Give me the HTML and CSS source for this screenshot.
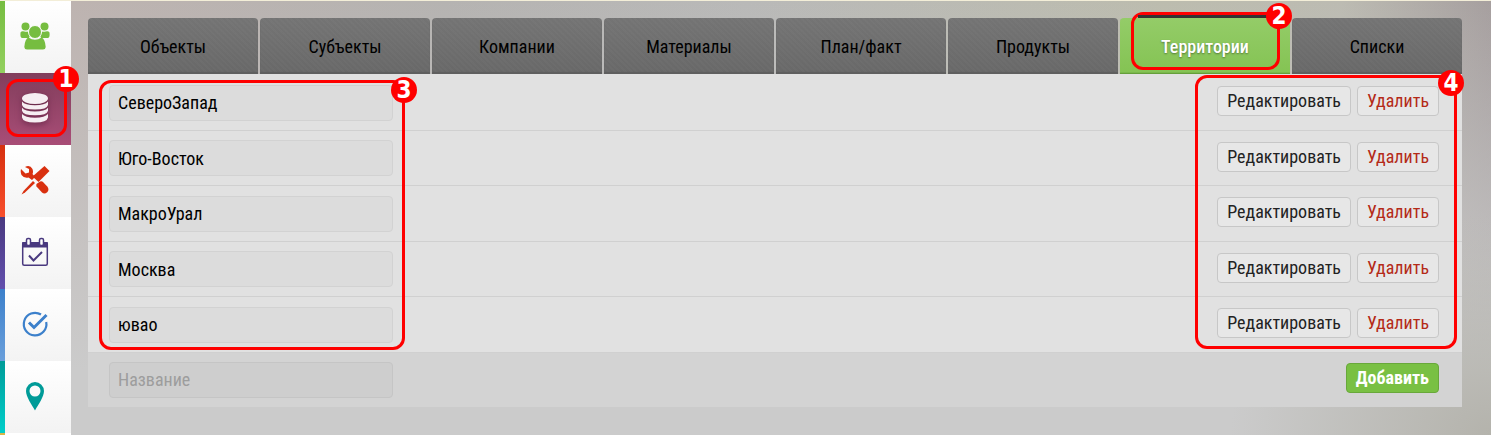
FILE: index.html
```html
<!DOCTYPE html>
<html lang="ru">
<head>
<meta charset="utf-8">
<title>Территории</title>
<link rel="stylesheet" href="styles.css">
</head>
<body>
<div class="app">
  <nav class="sidebar" aria-label="Разделы">
    <a class="nav-item users" href="#" aria-label="Пользователи">
      <svg width="30" height="28" viewBox="0 0 30 28" fill="currentColor"><circle cx="5.500" cy="4.500" r="4"/><circle cx="24.500" cy="4.500" r="4"/><path d="M.5 10.500Q1.500 9 3 9.200Q5 10 7.500 9.500L10 13 9 16H2Q0 15.500.5 10.500ZM29.500 10.500Q28.500 9 27 9.200Q25 10 22.500 9.500L20 13 21 16H28Q30 15.500 29.500 10.500Z"/><circle cx="15" cy="10" r="6.500" stroke="#fcfcfc" stroke-width="1"/><path d="M8.500 15.500Q15 20 21.500 15.500Q25 16.500 25.700 25Q25.500 27.500 23 27.500H7Q4.500 27.500 4.300 25Q5 16.500 8.500 15.500Z"/></svg>
    </a>
    <a class="nav-item data active" href="#" aria-label="Справочники">
      <svg width="28" height="32" viewBox="0 0 28 32" fill="currentColor"><ellipse cx="14" cy="6.500" rx="13" ry="5.500"/><path d="M1 9.500Q4 13.300 14 13.300T27 9.500V13Q26 17.500 14 17.500T1 13Z"/><path d="M1 15.700Q4 19.500 14 19.500T27 15.700V18.700Q26 23.200 14 23.200T1 18.700Z"/><path d="M1 22Q4 25.700 14 25.700T27 22V25.500Q26 30.500 14 30.500T1 25.500Z"/></svg>
    </a>
    <a class="nav-item tools" href="#" aria-label="Инструменты">
      <svg width="30" height="30" viewBox="0 0 30 30" fill="currentColor"><path d="M24.500 1 29.500 6 18.500 17 12.500 11.500Z"/><path d="M13 16 15 18 5 27.500 1.500 29.500 3.500 26Z"/><path d="M5 2Q10-.5 12.500 4Q13.500 7 12.500 9L15 12 12 15 8.500 12.500Q4 13.500 1.500 10Q.2 7 1 4L5.500 8.500 9 7.500V4Z"/><path d="M20 16.500Q22 16 23 17L27.500 21.800Q29.500 25 27.200 27.200Q24.500 29.500 22 27.500L16.500 21.500Q16 20 16.500 19Z"/></svg>
    </a>
    <a class="nav-item plan" href="#" aria-label="Календарь">
      <svg width="28" height="30" viewBox="0 0 28 30" fill="none" stroke="currentColor"><rect x="1.700" y="6" width="24.600" height="22.300" rx="1.500" stroke-width="1.500"/><path d="M1.500 5.500H26.500V10H1.500Z" fill="currentColor"/><rect x="5.500" y="1.500" width="4" height="7" rx="1.500" fill="#fff" stroke-width="1.500"/><rect x="18.500" y="1.500" width="4" height="7" rx="1.500" fill="#fff" stroke-width="1.500"/><path d="M8 18.500 12.500 23.500 21 15" stroke-width="2"/></svg>
    </a>
    <a class="nav-item tasks" href="#" aria-label="Задачи">
      <svg width="28" height="28" viewBox="0 0 28 28" fill="none" stroke="currentColor" stroke-width="2.200"><path d="M20 4.500A11.300 11.300 0 1 0 25.200 12"/><path d="M8 12.500 13 17.500 25.500 5" stroke-width="3"/></svg>
    </a>
    <a class="nav-item map" href="#" aria-label="Карта">
      <svg width="20" height="30" viewBox="0 0 20 30" fill="currentColor"><path fill-rule="evenodd" d="M10 1A9 9 0 0 1 19 10C19 16 13 24 10 29.500C7 24 1 16 1 10A9 9 0 0 1 10 1ZM10 4.500A5.500 5.500 0 1 0 10 15.500 5.500 5.500 0 0 0 10 4.500Z"/></svg>
    </a>
    <span class="nav-next"></span>
    <div class="mark mark-1"><b>1</b></div>
  </nav>
  <main class="content">
    <nav class="tabs">
      <a class="tab" href="#">Объекты</a>
      <a class="tab" href="#">Субъекты</a>
      <a class="tab" href="#">Компании</a>
      <a class="tab" href="#">Материалы</a>
      <a class="tab" href="#">План/факт</a>
      <a class="tab" href="#">Продукты</a>
      <a class="tab current" href="#">Территории<span class="mark mark-2"><b>2</b></span></a>
      <a class="tab" href="#">Списки</a>
    </nav>
    <table class="list">
      <tbody>
        <tr><td><input aria-label="Название 1" value="СевероЗапад"></td><td class="actions"><button class="btn">Редактировать</button><button class="btn danger">Удалить</button></td></tr>
        <tr><td><input aria-label="Название 2" value="Юго-Восток"></td><td class="actions"><button class="btn">Редактировать</button><button class="btn danger">Удалить</button></td></tr>
        <tr><td><input aria-label="Название 3" value="МакроУрал"></td><td class="actions"><button class="btn">Редактировать</button><button class="btn danger">Удалить</button></td></tr>
        <tr><td><input aria-label="Название 4" value="Москва"></td><td class="actions"><button class="btn">Редактировать</button><button class="btn danger">Удалить</button></td></tr>
        <tr><td><input aria-label="Название 5" value="ювао"></td><td class="actions"><button class="btn">Редактировать</button><button class="btn danger">Удалить</button></td></tr>
        <tr class="new"><td><input aria-label="Новая территория" placeholder="Название"></td><td class="actions"><button class="btn add">Добавить</button></td></tr>
      </tbody>
    </table>
    <div class="mark mark-3"><b>3</b></div>
    <div class="mark mark-4"><b>4</b></div>
  </main>
</div>
</body>
</html>
```
FILE: styles.css
```css
* { box-sizing: border-box; }
body {
  margin: 0;
  font: 18px/24px "Roboto Condensed", "Liberation Sans Narrow", Roboto, sans-serif;
  color: #000;
}
.app {
  display: flex;
  min-height: 100vh;
  border-top: 1px solid #f3eed8;
  overflow: hidden;
  background:
    radial-gradient(ellipse 260px 220px at 100% 100%, #b4b3ac, rgba(180, 179, 172, 0)),
    linear-gradient(to bottom, transparent 0%, #cbcbcb 85%),
    linear-gradient(to right, #bdb3b0 5%, #b5b3b1 30%, #b9b9b8 50%, #bcbcae 78%, #bcbbb2 90%, #a69f9f 100%);
}
.sidebar { position: relative; flex: none; width: 71px; }
.nav-item {
  display: flex;
  align-items: center;
  justify-content: center;
  height: 72px;
  border-left: 5px solid;
  padding: 0 6px 3px 0;
  background: linear-gradient(#fff, #f3f3f3);
}
.nav-item svg { display: block; }
.users { color: #76bd40; border-image: linear-gradient(#76bd40, #93d05f) 1; }
.tools { color: #d9300f; border-image: linear-gradient(#d62f0e, #f84f2c) 1; }
.plan { color: #49397f; border-image: linear-gradient(#49397f, #6350ae) 1; }
.tasks { color: #3c80cb; border-image: linear-gradient(#3c80cb, #6a9fdb) 1; }
.map { color: #009b98; border-image: linear-gradient(#009b98, #00cfcb) 1; }
.data { color: #f6eef2; border: 0; padding: 0 1px 3px 0; background: linear-gradient(#823e5c, #a94d77); }
.data svg { filter: drop-shadow(0 2px 3px rgba(60, 10, 40, .5)); }
.nav-next { display: block; height: 2px; background: #fff; border-left: 5px solid #dab648; }
.content { position: relative; flex: 1; padding: 17px 29px 28px 17px; min-width: 0; }
.tabs { display: grid; grid-template-columns: repeat(8, 1fr); gap: 2px; }
.tab {
  position: relative;
  display: flex;
  align-items: center;
  justify-content: center;
  height: 56px;
  padding-top: 2px;
  border-radius: 4px 4px 0 0;
  color: #000;
  text-decoration: none;
  background: repeating-linear-gradient(45deg, rgba(255, 255, 255, .02) 0 2px, transparent 2px 4px), linear-gradient(#747474, #686868);
  box-shadow: inset 0 -2px 1px #5f5f5f;
}
.current {
  color: #fff;
  font-weight: 500;
  text-shadow: 0 1px 2px rgba(0, 0, 0, .4);
  background: linear-gradient(#94cc68, #84c353);
  box-shadow: inset 0 -1px #659f3b, inset 0 -2px #7ab84c;
}
.list { width: 100%; padding-top: 1px; border-spacing: 0; background: #e1e1e1; }
.list td { height: 55px; padding: 0 21px; border-bottom: 1px solid #d0d0d0; vertical-align: middle; }
.list tr:nth-child(odd) td { height: 56px; }
.list .new td { height: 54px; background: #d3d3d3; border-color: #d3d3d3; }
.list .actions { text-align: right; padding: 0 23px 3px; }
.list input {
  display: block;
  width: 284px;
  height: 36px;
  padding: 0 8px;
  border: 1px solid #d2d2d2;
  border-radius: 4px;
  background: #dcdcdc;
  font: inherit;
  color: #000;
}
.list input::placeholder { color: #9d9d9d; opacity: 1; }
.list .new input { background: #cecece; border-color: #c5c5c5; }
.btn {
  height: 30px;
  padding: 0 9px;
  border: 1px solid #c7c7c7;
  border-radius: 4px;
  background: #e7e7e7;
  color: #222;
  font: inherit;
  line-height: 28px;
}
.btn + .btn { margin-left: 6px; }
.danger { color: #b42a18; }
.add { background: #79c043; border-color: #68a83a; color: #fff; font-weight: 700; }
.mark { position: absolute; border: 3px solid #f00; border-radius: 12px; pointer-events: none; }
.mark b {
  position: absolute;
  width: 26px;
  height: 26px;
  border-radius: 50%;
  background: #f00;
  color: #fff;
  font: 700 24px/26px "DejaVu Sans Condensed", "Noto Sans", sans-serif;
  text-align: center;
  text-shadow: none;
}
.mark-1 { left: 6px; top: 78px; width: 61px; height: 58px; }
.mark-1 b { right: -15px; top: -16px; }
.mark-2 { left: 11px; right: 10px; top: -6px; height: 58px; z-index: 1; }
.mark-2::before { content: ""; position: absolute; left: 4px; right: 8px; top: 0; height: 3px; background: #333; }
.mark-2 b { right: -15px; top: -12px; }
.mark-3 { left: 28px; top: 79px; width: 306px; height: 270px; }
.mark-3 b { right: -15px; top: -6px; }
.mark-4 { right: 34px; top: 74px; width: 262px; height: 274px; }
.mark-4 b { right: -10px; top: -8px; }
```
